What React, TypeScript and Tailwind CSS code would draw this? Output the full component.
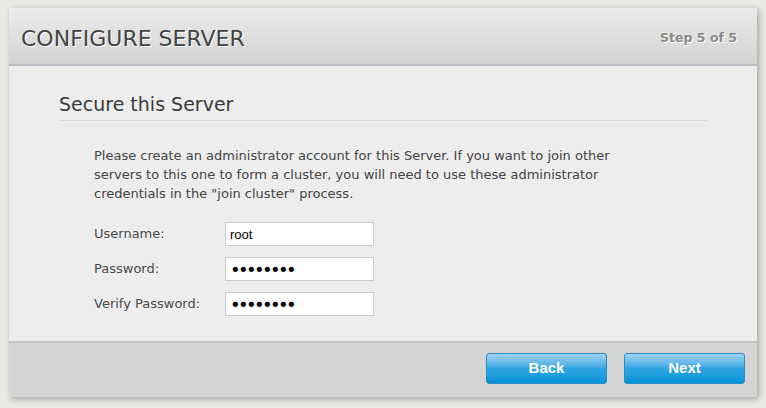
import React from "react";

const sans = { fontFamily: '"DejaVu Sans", Verdana, sans-serif' };

function Field({ label, value, type }: { label: string; value: string; type: string }) {
  const pw = type === "password";
  return (
    <div className="flex items-center h-[24px]">
      <label className="w-[131px] text-[13px] text-[#4a4a4a]">{label}</label>
      <input
        type={type}
        defaultValue={value}
        className={
          pw
            ? "w-[149px] h-[24px] bg-white border border-[#c9cdd0] px-[4px] text-[18px] tracking-[-2.6px] text-black outline-none"
            : "w-[149px] h-[24px] bg-white border border-[#c9cdd0] px-[4px] text-[13px] text-black outline-none"
        }
        style={{
          fontFamily: pw ? '"DejaVu Sans", Verdana, sans-serif' : '"Liberation Sans", Arial, sans-serif',
        }}
      />
    </div>
  );
}

export default function App() {
  return (
    <div className="w-[766px] h-[408px] bg-[#ebe9e4] pt-[8px] pl-[9px]" style={sans}>
      <div className="w-[748px] h-[389px] flex flex-col bg-[#ededed] rounded-br-[4px] shadow-[2px_2px_6px_rgba(0,0,0,0.3)]">
        {/* header */}
        <div className="h-[58px] flex items-center justify-between pl-[12px] pr-[20px] pt-[4px] bg-gradient-to-b from-[#ececec] to-[#d3d3d3] border-b-2 border-[#bcbcc4]">
          <h1 className="text-[22px] text-[#444] [text-shadow:1px_1px_0_#fff]">CONFIGURE SERVER</h1>
          <span className="text-[12.5px] font-bold text-[#8a8a8a] [text-shadow:1px_1px_0_#fff]">Step 5 of 5</span>
        </div>

        {/* body */}
        <div className="flex-1 pt-[25px] pl-[50px] pr-[50px]">
          <h2 className="text-[19px] leading-[26px] text-[#3c3c3c] pb-[3px] border-b border-[#d8d8d8]">Secure this Server</h2>
          <div className="pl-[35px] pt-[25px]">
            <p className="text-[13px] leading-[19px] text-[#444] whitespace-nowrap">
              Please create an administrator account for this Server. If you want to join other
              <br />
              servers to this one to form a cluster, you will need to use these administrator
              <br />
              credentials in the "join cluster" process.
            </p>
            <div className="flex flex-col gap-[11px] mt-[19px]">
              <Field label="Username:" value="root" type="text" />
              <Field label="Password:" value="password" type="password" />
              <Field label="Verify Password:" value="password" type="password" />
            </div>
          </div>
        </div>

        {/* footer */}
        <div className="h-[56px] bg-[#d4d4d4] border-t-2 border-[#c6c6c6] flex items-start justify-end gap-[17px] pt-[10px] pr-[12px] rounded-br-[4px]">
          {["Back", "Next"].map((t) => (
            <button
              key={t}
              className="w-[121px] h-[31px] rounded-[3px] border border-[#2f8ac9] bg-gradient-to-b from-[#a3d4f3] via-[#2fa6e3] to-[#0092d6] text-white font-bold text-[15px]"
              style={{ fontFamily: '"Liberation Sans", Arial, sans-serif' }}
            >
              {t}
            </button>
          ))}
        </div>
      </div>
    </div>
  );
}
